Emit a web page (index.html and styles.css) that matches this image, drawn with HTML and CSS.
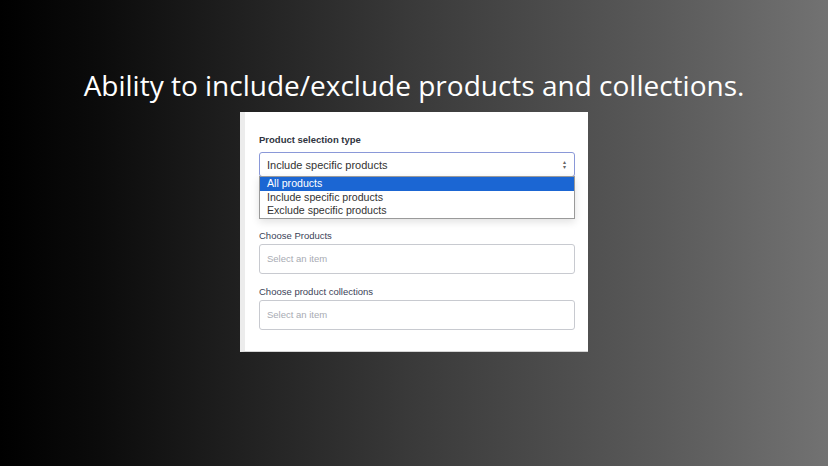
FILE: index.html
```html
<!DOCTYPE html>
<html>

<head>
    <title>Product selection</title>
    <meta name="viewport" content="width=device-width, initial-scale=1" charset="UTF-8">
    <link rel="stylesheet" href="styles.css">
</head>

<body>
    <!-- 标题 -->
    <h1 class="headline">Ability to include/exclude products and collections.</h1>

    <!-- 截图里的表单卡片 -->
    <div class="card">
        <div class="field field-type">
            <span class="label label-bold">Product selection type</span>
            <div class="select">
                <span>Include specific products</span>
                <span class="arrows">&#9652;<br>&#9662;</span>
            </div>
            <!-- 展开的下拉列表 -->
            <ul class="options">
                <li class="active">All products</li>
                <li>Include specific products</li>
                <li>Exclude specific products</li>
            </ul>
        </div>

        <div class="field">
            <span class="label">Choose Products</span>
            <div class="input">Select an item</div>
        </div>

        <div class="field">
            <span class="label">Choose product collections</span>
            <div class="input">Select an item</div>
        </div>
    </div>
</body>

</html>
```

FILE: styles.css
```css
body {
    margin: 0;
    width: 828px;
    height: 466px;
    overflow: hidden;
    background: linear-gradient(to right, #000000 0%, #0b0b0b 12%, #3a3a3a 50%, #5a5a5a 80%, #727272 100%);
}

.headline {
    margin: 0;
    padding-top: 68px;
    height: 34px;
    line-height: 34px;
    text-align: center;
    color: #ffffff;
    font-family: "Open Sans", sans-serif;
    font-weight: 400;
    font-size: 28px;
}

.card {
    width: 348px;
    margin: 10px auto 0;
    padding: 22px 13px 21px 14px;
    box-sizing: border-box;
    background-color: #ffffff;
    border-left: 5px solid #ececec;
    border-bottom: 1px solid #d4d4d4;
    font-family: "Liberation Sans", Arial, sans-serif;
}

.field {
    position: relative;
    display: flex;
    flex-direction: column;
    gap: 2px;
    margin-bottom: 12px;
}

.field:last-child {
    margin-bottom: 0;
}

.field-type {
    margin-bottom: 53px;
}

.label {
    font-size: 9.5px;
    line-height: 12px;
    color: #3b4257;
}

.label-bold {
    font-weight: bold;
    color: #2f3440;
    margin-bottom: 4px;
}

.select {
    display: flex;
    justify-content: space-between;
    align-items: center;
    height: 25px;
    padding: 0 8px 0 7px;
    border: 1.5px solid #8a98d8;
    border-radius: 3px;
    box-sizing: border-box;
    font-size: 11px;
    color: #333333;
}

.arrows {
    font-size: 6px;
    line-height: 5px;
    color: #666666;
    text-align: center;
}

.options {
    position: absolute;
    top: 42px;
    left: 0;
    right: 0;
    margin: 0;
    padding: 0;
    list-style: none;
    background-color: #ffffff;
    border: 1px solid #9a9a9a;
    box-shadow: 0 3px 8px rgba(0, 0, 0, 0.12);
    font-size: 10.6px;
    color: #333333;
}

.options li {
    height: 13.5px;
    line-height: 13.5px;
    padding-left: 7px;
}

.options li.active {
    background-color: #1b66d3;
    color: #ffffff;
}

.input {
    height: 30px;
    line-height: 28px;
    padding-left: 7px;
    border: 1px solid #c8cad0;
    border-radius: 3px;
    box-sizing: border-box;
    font-size: 9.5px;
    color: #a8abb3;
}
```
